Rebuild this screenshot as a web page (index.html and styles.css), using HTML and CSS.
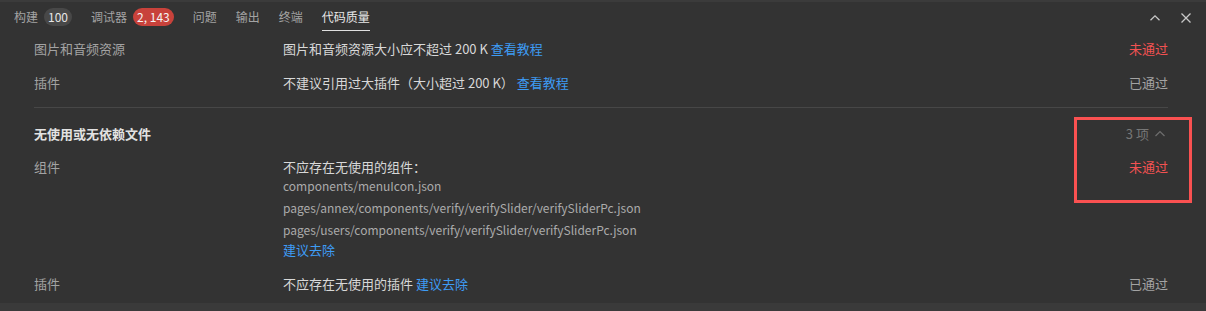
FILE: index.html
```html
<!DOCTYPE html>
<html lang="zh-CN">
<head>
<meta charset="utf-8">
<link rel="stylesheet" href="styles.css">
</head>
<body>
<div class="panel">
  <div class="tabbar">
    <div class="tabs">
      <div class="tab">构建<span class="badge">100</span></div>
      <div class="tab">调试器<span class="badge red">2, 143</span></div>
      <div class="tab">问题</div>
      <div class="tab">输出</div>
      <div class="tab">终端</div>
      <div class="tab active">代码质量</div>
    </div>
    <div class="actions">
      <svg class="icon" width="12" height="12" viewBox="0 0 12 12"><path d="M1.5 8.2 L6 3.8 L10.5 8.2" fill="none" stroke="#c8c8c8" stroke-width="1.3"/></svg>
      <svg class="icon" width="12" height="12" viewBox="0 0 12 12"><path d="M1.5 1.5 L10.5 10.5 M10.5 1.5 L1.5 10.5" fill="none" stroke="#c8c8c8" stroke-width="1.3"/></svg>
    </div>
  </div>
  <div class="content">
    <div class="section first">
      <div class="row">
        <div class="c1">图片和音频资源</div>
        <div class="c2">图片和音频资源大小应不超过 200 K <a class="link">查看教程</a></div>
        <div class="c3 fail">未通过</div>
      </div>
      <div class="row">
        <div class="c1">插件</div>
        <div class="c2">不建议引用过大插件（大小超过 200 K） <a class="link">查看教程</a></div>
        <div class="c3 pass">已通过</div>
      </div>
    </div>
    <div class="section second">
      <div class="head">
        <div class="title">无使用或无依赖文件</div>
        <div class="count">3 项 <svg width="12" height="10" viewBox="0 0 12 10"><path d="M1.5 7 L6 2.5 L10.5 7" fill="none" stroke="#6e6e6e" stroke-width="1.2"/></svg></div>
      </div>
      <div class="row tall">
        <div class="c1">组件</div>
        <div class="c2">
          <div class="desc lead">不应存在无使用的组件：</div>
          <div class="path">components/menuIcon.json</div>
          <div class="path">pages/annex/components/verify/verifySlider/verifySliderPc.json</div>
          <div class="path">pages/users/components/verify/verifySlider/verifySliderPc.json</div>
          <div class="desc"><a class="link">建议去除</a></div>
        </div>
        <div class="c3 fail">未通过</div>
      </div>
      <div class="row last">
        <div class="c1">插件</div>
        <div class="c2">不应存在无使用的插件 <a class="link">建议去除</a></div>
        <div class="c3 pass">已通过</div>
      </div>
      <div class="highlight"></div>
    </div>
  </div>
  <div class="bottom"></div>
</div>
</body>
</html>
```

FILE: styles.css
```css
* { box-sizing: border-box; }
html, body { margin: 0; padding: 0; }
body {
  background: #333333;
  font-family: "Noto Sans CJK SC", "Microsoft YaHei", sans-serif;
  color: #d0d0d0;
  width: 1206px;
  height: 311px;
  overflow: hidden;
}
.panel { display: flex; flex-direction: column; height: 311px; }
.tabbar {
  height: 32px;
  border-top: 2px solid #3b3b3b;
  display: flex;
  justify-content: space-between;
  align-items: flex-start;
  flex: none;
}
.tabs { display: flex; padding-left: 14px; gap: 19px; }
.tab {
  font-size: 12px;
  color: #a3a3a3;
  height: 29px;
  padding-top: 1px;
  display: flex;
  align-items: center;
  gap: 6px;
  border-bottom: 1px solid transparent;
  line-height: 1;
}
.tab.active { color: #e8e8e8; border-bottom-color: #e0e0e0; }
.badge {
  display: inline-flex;
  align-items: center;
  justify-content: center;
  height: 18px;
  min-width: 28px;
  padding: 0 4px;
  border-radius: 9px;
  background: #484848;
  color: #e6e6e6;
  font-size: 12px;
}
.badge.red { background: #c8423b; color: #f4f4f4; }
.actions { display: flex; gap: 19px; padding-right: 14px; padding-top: 10px; }
.icon { display: block; }
.content { flex: 1; padding: 0 38px 0 34px; }
.section { position: relative; }
.section.first { border-bottom: 1px solid #474747; padding-bottom: 7px; }
.row { display: flex; align-items: flex-start; font-size: 13px; line-height: 18px; padding: 8px 0; }
.first .row { height: 34px; }
.c1 { width: 249px; color: #a3a3a3; flex: none; }
.c2 { flex: 1; color: #d8d8d8; }
.c3 { flex: none; text-align: right; }
.fail { color: #f25252; }
.pass { color: #a3a3a3; }
.link { color: #3e9cf5; }
.head { display: flex; justify-content: space-between; align-items: center; height: 50px; padding-top: 1px; }
.title { font-size: 13px; font-weight: bold; color: #e2e2e2; }
.count { font-size: 13px; color: #777; display: flex; align-items: center; gap: 5px; padding-right: 2px; }
.row.tall { padding-top: 0; padding-bottom: 0; }
.desc { line-height: 18px; }
.desc.lead { line-height: 17px; }
.path { font-size: 12px; color: #ababab; line-height: 22px; }
.row.last { padding-top: 16px; }
.highlight {
  position: absolute;
  left: 1040px;
  top: 9px;
  width: 118px;
  height: 86px;
  border: 3px solid #fa5151;
}
.bottom { height: 8px; background: #3a3a3a; flex: none; }
```
